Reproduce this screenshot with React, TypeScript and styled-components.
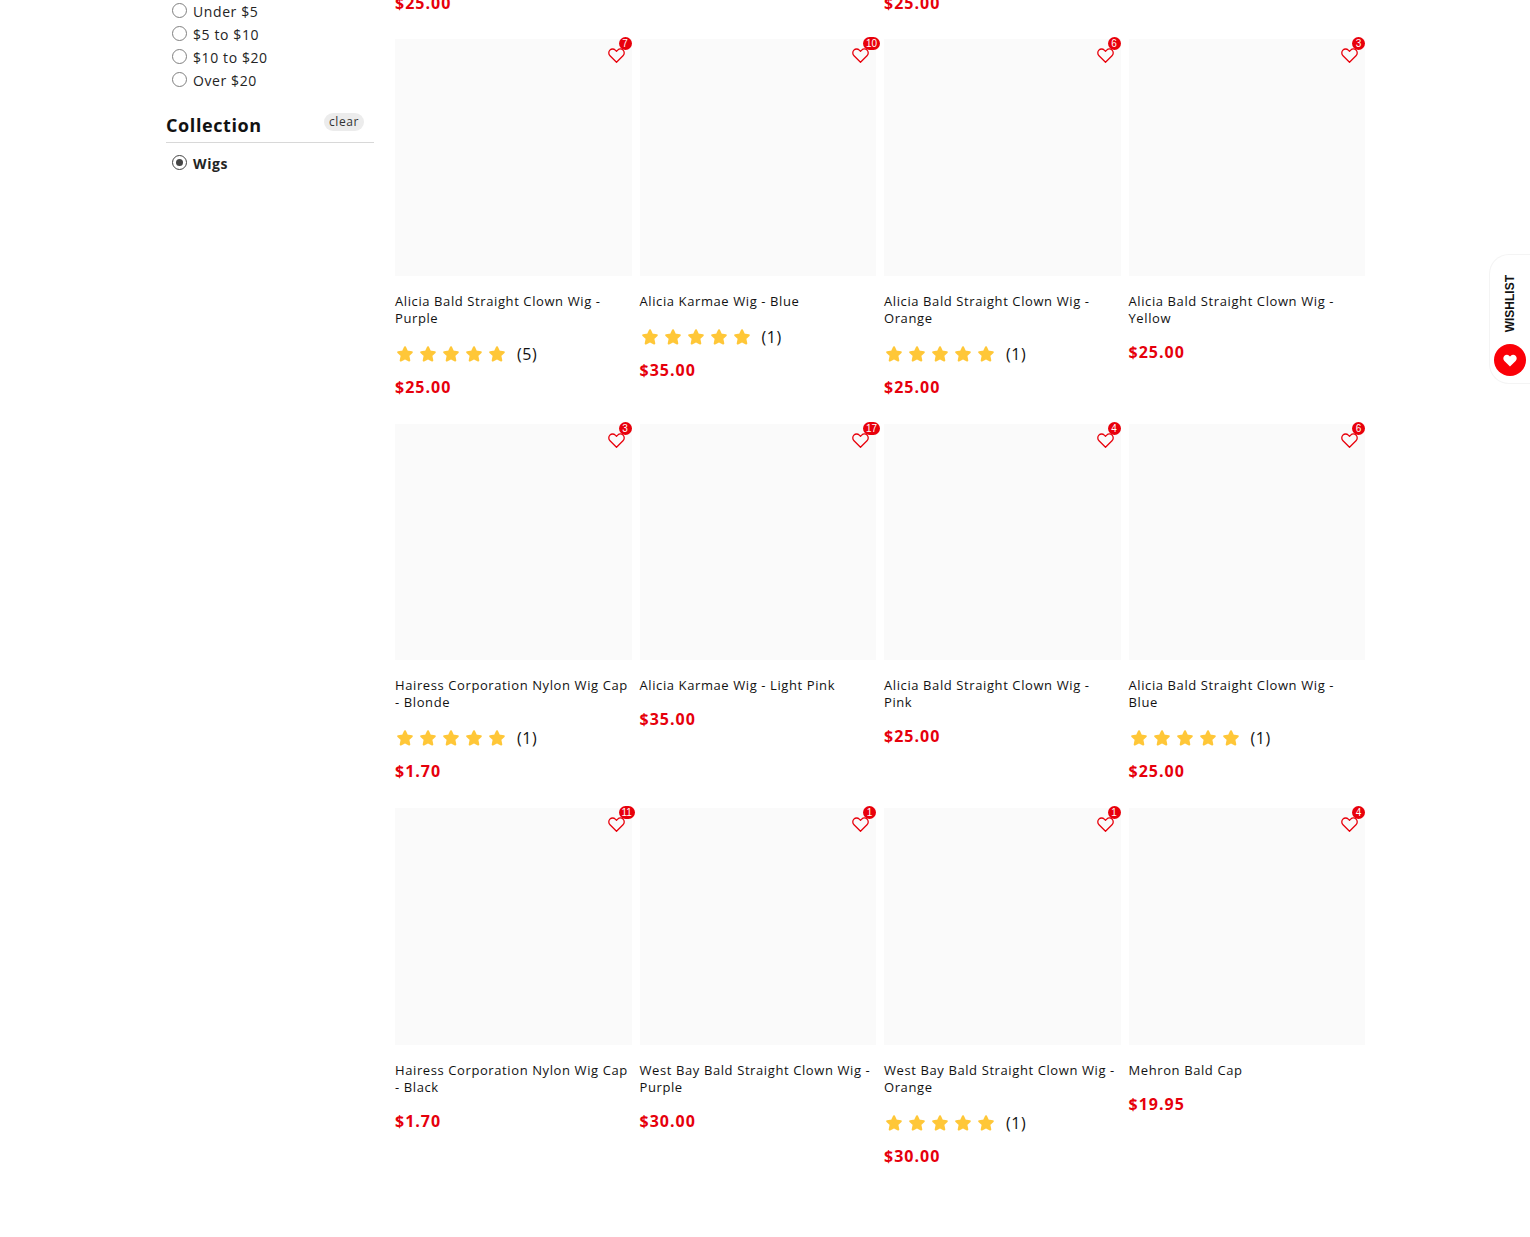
import React from "react";
import styled, { createGlobalStyle } from "styled-components";

const GlobalStyle = createGlobalStyle`
  *, *::before, *::after { box-sizing: border-box; }
  body {
    margin: 0;
    background: #fff;
    color: #121212;
    font-family: "Open Sans", "Noto Sans", sans-serif;
    font-size: 12px;
    letter-spacing: 0.05em;
    overflow-x: hidden;
  }
`;

const Page = styled.main`
  display: grid;
  grid-template-columns: 208px minmax(0, 1fr);
  column-gap: 21px;
  align-items: start;
  max-width: 1200px;
  margin: 0 auto;
  padding: 0 0 64px 1px;
`;

const FilterGroup = styled.fieldset`
  border: 0;
  margin: 0;
  padding: 0 0 20px;
  min-width: 0;
`;

const GroupHeader = styled.div`
  display: flex;
  justify-content: space-between;
  align-items: flex-start;
  height: 31px;
  margin-bottom: 9px;
  padding-right: 10px;
  border-bottom: 1px solid #d8d8d8;
`;

const GroupTitle = styled.h2`
  margin: 0;
  font-size: 18px;
  line-height: 26px;
`;

const ClearButton = styled.button`
  height: 18px;
  margin-top: 1px;
  padding: 0 5px;
  border: 0;
  border-radius: 9px;
  background: #ececec;
  color: #333;
  font: inherit;
  letter-spacing: inherit;
  line-height: 18px;
  cursor: pointer;
`;

const Option = styled.label`
  display: flex;
  align-items: center;
  gap: 6px;
  height: 23px;
  padding-left: 6px;
  font-size: 14px;
  color: #242424;

  &:has(input:checked) { font-weight: 700; }
`;

const Radio = styled.input`
  appearance: none;
  display: grid;
  place-items: center;
  width: 15px;
  height: 15px;
  margin: 0 0 2px;
  border: 1px solid #808080;
  border-radius: 50%;

  &:checked { border-color: #444; }
  &:checked::before {
    content: "";
    width: 7px;
    height: 7px;
    border-radius: 50%;
    background: #444;
  }
`;

const ProductGrid = styled.ul`
  display: grid;
  grid-template-columns: repeat(4, minmax(0, 1fr));
  gap: 8px;
  margin: 0;
  padding: 0;
  list-style: none;
`;

const PreviousRow = styled(ProductGrid)`
  margin: -22px 0 24px;
`;

const Card = styled.li`
  min-width: 0;
  padding-bottom: 17px;
`;

const Media = styled.div`
  position: relative;
  aspect-ratio: 1;
  background: #fafafa;
`;

const HeartButton = styled.button`
  position: absolute;
  top: 8px;
  right: 7px;
  display: block;
  width: 17px;
  height: 17px;
  padding: 0;
  border: 0;
  background: none;
  color: #e8000b;
  cursor: pointer;

  svg { display: block; }
`;

const Badge = styled.span`
  position: absolute;
  left: 11px;
  top: -10px;
  min-width: 13px;
  height: 13px;
  padding: 0 3px;
  border-radius: 7px;
  background: #e8000b;
  color: #fff;
  font: 10px/13px "Liberation Sans", Arial, sans-serif;
  letter-spacing: 0;
  text-align: center;
`;

const Title = styled.h3`
  margin: 17px 0 0;
  font-size: 13px;
  line-height: 17px;
  font-weight: 400;

  a { color: inherit; text-decoration: none; }
`;

const Rating = styled.div`
  display: flex;
  align-items: center;
  height: 24px;
  margin: 15px 0 -4px;
  padding-left: 2px;
  font-size: 16px;
`;

const Stars = styled.span`
  display: flex;
  gap: 7px;
  margin-right: 12px;
`;

const Price = styled.p`
  margin: 13px 0 0;
  color: #e6000c;
  font-size: 16px;
  line-height: 24px;
  font-weight: 700;
  letter-spacing: 1px;
`;

const WishlistTab = styled.button`
  position: fixed;
  top: 254px;
  right: 0;
  display: flex;
  flex-direction: column;
  align-items: center;
  justify-content: space-between;
  width: 41px;
  height: 130px;
  padding: 20px 4px 7px;
  border: 1px solid #f4f4f4;
  border-right: 0;
  border-radius: 20px 0 0 20px;
  background: #fff;
  color: #121212;
  font: bold 12px/16px "Liberation Sans", Arial, sans-serif;
  cursor: pointer;
`;

const TabText = styled.span`
  writing-mode: vertical-rl;
  transform: rotate(180deg);
`;

const TabIcon = styled.span`
  display: grid;
  place-items: center;
  width: 32px;
  height: 32px;
  border-radius: 50%;
  background: #fb0007;
`;

interface Product {
  name: string;
  price: string;
  likes: number;
  reviews?: number;
}

const previousPrices = ["$25.00", "", "$25.00", ""];

const priceRanges = ["Under $5", "$5 to $10", "$10 to $20", "Over $20"];

const products: Product[] = [
  { name: "Alicia Bald Straight Clown Wig - Purple", price: "$25.00", likes: 7, reviews: 5 },
  { name: "Alicia Karmae Wig - Blue", price: "$35.00", likes: 10, reviews: 1 },
  { name: "Alicia Bald Straight Clown Wig - Orange", price: "$25.00", likes: 6, reviews: 1 },
  { name: "Alicia Bald Straight Clown Wig - Yellow", price: "$25.00", likes: 3 },
  { name: "Hairess Corporation Nylon Wig Cap - Blonde", price: "$1.70", likes: 3, reviews: 1 },
  { name: "Alicia Karmae Wig - Light Pink", price: "$35.00", likes: 17 },
  { name: "Alicia Bald Straight Clown Wig - Pink", price: "$25.00", likes: 4 },
  { name: "Alicia Bald Straight Clown Wig - Blue", price: "$25.00", likes: 6, reviews: 1 },
  { name: "Hairess Corporation Nylon Wig Cap - Black", price: "$1.70", likes: 11 },
  { name: "West Bay Bald Straight Clown Wig - Purple", price: "$30.00", likes: 1 },
  { name: "West Bay Bald Straight Clown Wig - Orange", price: "$30.00", likes: 1, reviews: 1 },
  { name: "Mehron Bald Cap", price: "$19.95", likes: 4 },
];

const HeartOutline = () => (
  <svg width="17" height="17" viewBox="0 0 17 17" fill="none" stroke="currentColor" strokeWidth="1.3" strokeLinejoin="round" aria-hidden="true">
    <path d="M8.5 15.3 2 8.8C.4 7.2.4 4.6 1.9 3.1 3.4 1.6 5.8 1.6 7.3 3.1L8.5 4.3 9.7 3.1C11.2 1.6 13.6 1.6 15.1 3.1 16.6 4.6 16.6 7.2 15 8.8Z" />
  </svg>
);

const HeartSolid = () => (
  <svg width="14" height="13" viewBox="0 0 14 13" fill="#fff" aria-hidden="true">
    <path d="M7 12.5 1.4 7C-.1 5.4 0 3 1.4 1.7 2.9.3 5.1.5 6.4 1.9L7 2.5 7.6 1.9C8.9.5 11.1.3 12.6 1.7 14 3 14.1 5.4 12.6 7Z" />
  </svg>
);

const Star = () => (
  <svg width="16" height="16" viewBox="0 0 16 16" fill="#ffc738" stroke="#ffc738" strokeWidth="2" strokeLinejoin="round" aria-hidden="true">
    <path d="M8 1.2 10 5.5 14.8 6.2 11.3 9.5 12.3 14.5 8 12.3 3.7 14.5 4.7 9.5 1.2 6.2 6 5.5Z" />
  </svg>
);

const ProductCard = ({ product }: { product: Product }) => (
  <Card>
    <Media>
      <HeartButton type="button" aria-label="Add to wishlist">
        <HeartOutline />
        <Badge>{product.likes}</Badge>
      </HeartButton>
    </Media>
    <Title>
      <a href="#">{product.name}</a>
    </Title>
    {product.reviews && (
      <Rating>
        <Stars>
          {[1, 2, 3, 4, 5].map((n) => (
            <Star key={n} />
          ))}
        </Stars>
        ({product.reviews})
      </Rating>
    )}
    <Price>{product.price}</Price>
  </Card>
);

export default function App() {
  return (
    <>
      <GlobalStyle />
      <Page>
        <form>
          <FilterGroup aria-label="Price">
            {priceRanges.map((range) => (
              <Option key={range}>
                <Radio type="radio" name="price" />
                {range}
              </Option>
            ))}
          </FilterGroup>
          <FilterGroup aria-label="Collection">
            <GroupHeader>
              <GroupTitle>Collection</GroupTitle>
              <ClearButton type="button">clear</ClearButton>
            </GroupHeader>
            <Option>
              <Radio type="radio" name="collection" defaultChecked />
              Wigs
            </Option>
          </FilterGroup>
        </form>
        <section>
          <PreviousRow>
            {previousPrices.map((price, i) => (
              <li key={i}>{price && <Price>{price}</Price>}</li>
            ))}
          </PreviousRow>
          <ProductGrid>
            {products.map((product, i) => (
              <ProductCard key={i} product={product} />
            ))}
          </ProductGrid>
        </section>
      </Page>
      <WishlistTab type="button">
        <TabText>WISHLIST</TabText>
        <TabIcon>
          <HeartSolid />
        </TabIcon>
      </WishlistTab>
    </>
  );
}
